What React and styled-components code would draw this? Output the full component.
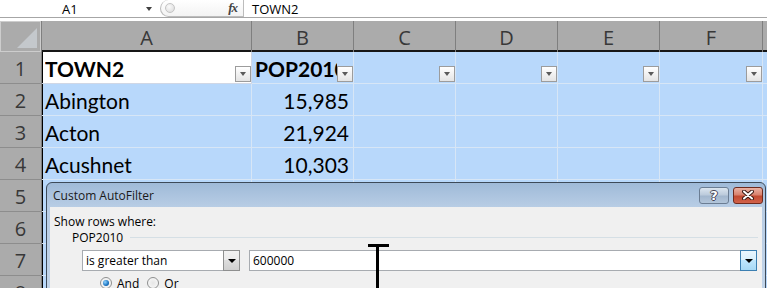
import React from 'react';
import styled, { createGlobalStyle } from 'styled-components';

const GlobalStyle = createGlobalStyle`
    html, body {
        margin: 0;
        padding: 0;
        background: #fff;
        overflow: hidden;
    }
    body {
        font-family: "Open Sans", "Liberation Sans", sans-serif;
    }
`;

const Page = styled.div`
    position: relative;
    width: 767px;
    height: 288px;
    overflow: hidden;
`;

const FormulaBar = styled.div`
    display: flex;
    height: 17px;
    border-bottom: 1px solid #a6a6a6;
    margin-bottom: 3px;
    font: 13px "Open Sans", sans-serif;
    color: #000;
`;

const NameBox = styled.div`
    width: 160px;
    box-sizing: border-box;
    display: flex;
    align-items: center;
    padding-left: 62px;
`;

const NameArrow = styled.span`
    margin-left: auto;
    margin-right: 8px;
    border-left: 3px solid transparent;
    border-right: 3px solid transparent;
    border-top: 4px solid #404040;
`;

const FxPill = styled.div`
    width: 84px;
    box-sizing: border-box;
    display: flex;
    align-items: center;
    border: 1px solid #bcbcbc;
    border-top: none;
    border-radius: 0 0 0 9px;
    border-top-left-radius: 9px;
    background: linear-gradient(#ffffff, #f3f3f3);
    padding: 0 6px 0 4px;
`;

const Grip = styled.span`
    width: 8px;
    height: 8px;
    border-radius: 50%;
    border: 1px solid #c4c4c4;
    background: radial-gradient(circle at 40% 35%, #fafafa, #d8d8d8);
`;

const Fx = styled.span`
    margin-left: auto;
    font: italic bold 13px "Liberation Serif", serif;
    color: #444;
    letter-spacing: -1px;
`;

const FormulaText = styled.div`
    flex: 1;
    display: flex;
    align-items: center;
    padding-left: 8px;
`;

const Sheet = styled.div`
    display: grid;
    width: 870px;
    grid-template-columns: 42px 210px 102px 102px 102px 102px 103px 1fr;
    grid-template-rows: 31px;
    grid-auto-rows: 32px;
`;

const Corner = styled.div`
    background: #ababab;
    border-right: 1px solid #7f7f7f;
    box-shadow: inset 1px 1px 0 #cdcdcd, inset -1px -1px 0 #cdcdcd;
    display: flex;
    align-items: flex-end;
    justify-content: flex-end;
    padding: 0 4px 4px 0;
`;

const CornerMark = styled.span`
    width: 0;
    height: 0;
    border-left: 20px solid transparent;
    border-bottom: 20px solid #c4c8cc;
`;

const ColHeader = styled.div`
    background: #ababab;
    border-right: 1px solid #7f7f7f;
    box-shadow: inset 0 -2px 0 #161616;
    display: flex;
    align-items: center;
    justify-content: center;
    padding-top: 2px;
    font: 20px "Open Sans", sans-serif;
    color: #383838;
`;

const RowHeader = styled.div`
    background: #ababab;
    border-right: 1px solid #7f7f7f;
    border-bottom: 1px solid #8d8d8d;
    display: flex;
    align-items: center;
    justify-content: center;
    padding-top: 2px;
    font: 20px "Open Sans", sans-serif;
    color: #383838;
`;

const Cell = styled.div`
    background: ${p => (p.$active ? '#ffffff' : '#b8d8fb')};
    border-right: 1px solid ${p => (p.$active ? '#d0d7e5' : '#d7e6f6')};
    border-bottom: 1px solid ${p => (p.$active ? '#d0d7e5' : '#d7e6f6')};
    box-shadow: ${p => (p.$edge ? 'inset 1px 0 0 #000' : 'none')};
    display: flex;
    align-items: center;
    justify-content: ${p => (p.$right ? 'flex-end' : 'flex-start')};
    padding: 2px 4px 0 3px;
    min-width: 0;
    overflow: hidden;
    font: ${p => (p.$bold ? 'bold' : 'normal')} 21px Lato, sans-serif;
    color: #000;
`;

const HeadCell = styled(Cell)`
    padding-right: 0;
    padding-bottom: 0;
`;

const HeadText = styled.span`
    flex: 1;
    min-width: 0;
    overflow: hidden;
    white-space: nowrap;
`;

const FilterButton = styled.span`
    flex: none;
    align-self: flex-end;
    margin-bottom: 1px;
    width: 16px;
    height: 16px;
    box-sizing: border-box;
    border: 1px solid #9c9c9c;
    background: linear-gradient(#ffffff, #e4e4e4);
    display: flex;
    align-items: center;
    justify-content: center;
    &::after {
        content: '';
        border-left: 3.5px solid transparent;
        border-right: 3.5px solid transparent;
        border-top: 4px solid #5a5a5a;
    }
`;

const Dialog = styled.div`
    position: absolute;
    left: 46px;
    top: 182px;
    width: 720px;
    height: 130px;
    box-sizing: border-box;
    border: 1px solid #3d4a59;
    border-radius: 6px 6px 0 0;
    background: linear-gradient(#9fbad8, #b8cde5 24px, #c4d6ea);
    font: 12px "Open Sans", sans-serif;
    color: #000;
`;

const TitleBar = styled.div`
    height: 24px;
    display: flex;
    align-items: center;
    padding: 0 2px 0 6px;
`;

const Title = styled.span`
    flex: 1;
    color: #1a1a1a;
`;

const CaptionButton = styled.span`
    width: 30px;
    height: 17px;
    box-sizing: border-box;
    margin-left: 4px;
    border-radius: 3px;
    border: 1px solid ${p => (p.$close ? '#6e2a1e' : '#6b7d93')};
    background: ${p =>
        p.$close
            ? 'linear-gradient(#eab1a3, #d9826e 45%, #c24a31 55%, #d1624a)'
            : 'linear-gradient(#dbe5ef, #bccbdc 45%, #a3b7ce 55%, #b3c6db)'};
    display: flex;
    align-items: center;
    justify-content: center;
    font: bold 13px "DejaVu Sans", sans-serif;
    color: #fff;
    text-shadow: 1px 0 #445, -1px 0 #445, 0 1px #445, 0 -1px #445;
`;

const Body = styled.div`
    margin: 0 3px;
    height: 100%;
    background: #f0f0f0;
    padding: 7px 4px 0 4px;
`;

const Label = styled.div`
    height: 15px;
    line-height: 15px;
`;

const GroupRow = styled.div`
    display: flex;
    align-items: center;
    height: 16px;
    margin-left: 18px;
`;

const GroupLine = styled.span`
    flex: 1;
    height: 1px;
    margin-left: 7px;
    background: #d5dfe5;
`;

const ConditionRow = styled.div`
    display: flex;
    gap: 9px;
    margin: 5px 0 0 28px;
`;

const Combo = styled.div`
    width: ${p => p.$width}px;
    height: 21px;
    box-sizing: border-box;
    border: 1px solid #a7abb0;
    background: #fff;
    display: flex;
    align-items: center;
    padding-left: 3px;
`;

const ComboText = styled.span`
    flex: 1;
`;

const ComboButton = styled.span`
    width: 17px;
    height: 21px;
    box-sizing: border-box;
    margin: -1px -1px -1px 0;
    border: 1px solid ${p => (p.$hot ? '#3c7fb1' : '#8e8f8f')};
    background: ${p =>
        p.$hot
            ? 'linear-gradient(#eaf6fd, #d9f0fc 50%, #bee6fd 50%, #a7d9f5)'
            : 'linear-gradient(#f2f2f2, #ebebeb 50%, #dddddd 50%, #cfcfcf)'};
    display: flex;
    align-items: center;
    justify-content: center;
    &::after {
        content: '';
        border-left: 4px solid transparent;
        border-right: 4px solid transparent;
        border-top: 4px solid #000;
    }
`;

const RadioRow = styled.div`
    display: flex;
    align-items: center;
    height: 16px;
    margin: 4px 0 0 46px;
`;

const Radio = styled.span`
    width: 12px;
    height: 12px;
    box-sizing: border-box;
    border-radius: 50%;
    border: 1px solid #8e8f8f;
    background: radial-gradient(circle, #e6e6e6, #fbfbfb);
    display: flex;
    align-items: center;
    justify-content: center;
    &::after {
        content: '';
        display: ${p => (p.$checked ? 'block' : 'none')};
        width: 6px;
        height: 6px;
        border-radius: 50%;
        background: radial-gradient(circle at 35% 35%, #8fd3ff, #1b73c0 60%, #0d4a85);
    }
`;

const RadioLabel = styled.span`
    margin: 0 8px 0 5px;
`;

const IBeam = styled.svg`
    position: absolute;
    left: 368px;
    top: 244px;
`;

const columns = ['A', 'B', 'C', 'D', 'E', 'F', 'G'];

const rows = [
    ['Abington', '15,985'],
    ['Acton', '21,924'],
    ['Acushnet', '10,303'],
    [], [], [], []
];

const CloseIcon = () => (
    <svg width='12' height='10' viewBox='0 0 12 10'>
        <path d='M2 1.5 L10 8.5 M10 1.5 L2 8.5' stroke='#3b1a14' strokeWidth='4' strokeLinecap='round' />
        <path d='M2 1.5 L10 8.5 M10 1.5 L2 8.5' stroke='#fff' strokeWidth='2' strokeLinecap='round' />
    </svg>
);

const App = () => {
    return (
        <Page>
            <GlobalStyle />
            <FormulaBar>
                <NameBox>
                    A1
                    <NameArrow />
                </NameBox>
                <FxPill>
                    <Grip />
                    <Fx>fx</Fx>
                </FxPill>
                <FormulaText>TOWN2</FormulaText>
            </FormulaBar>

            <Sheet>
                <Corner><CornerMark /></Corner>
                {columns.map(c => <ColHeader key={c}>{c}</ColHeader>)}

                <RowHeader>1</RowHeader>
                <HeadCell $active $edge $bold>
                    <HeadText>TOWN2</HeadText>
                    <FilterButton />
                </HeadCell>
                <HeadCell $bold>
                    <HeadText>POP2010</HeadText>
                    <FilterButton />
                </HeadCell>
                {['C', 'D', 'E', 'F'].map(c => (
                    <HeadCell key={c}>
                        <HeadText />
                        <FilterButton />
                    </HeadCell>
                ))}
                <Cell />

                {rows.map((r, i) => (
                    <React.Fragment key={i}>
                        <RowHeader>{i + 2}</RowHeader>
                        <Cell $edge>{r[0]}</Cell>
                        <Cell $right>{r[1]}</Cell>
                        <Cell />
                        <Cell />
                        <Cell />
                        <Cell />
                        <Cell />
                    </React.Fragment>
                ))}
            </Sheet>

            <Dialog>
                <TitleBar>
                    <Title>Custom AutoFilter</Title>
                    <CaptionButton>?</CaptionButton>
                    <CaptionButton $close><CloseIcon /></CaptionButton>
                </TitleBar>
                <Body>
                    <Label>Show rows where:</Label>
                    <GroupRow>
                        POP2010
                        <GroupLine />
                    </GroupRow>
                    <ConditionRow>
                        <Combo $width={158}>
                            <ComboText>is greater than</ComboText>
                            <ComboButton />
                        </Combo>
                        <Combo $width={508}>
                            <ComboText>600000</ComboText>
                            <ComboButton $hot />
                        </Combo>
                    </ConditionRow>
                    <RadioRow>
                        <Radio $checked />
                        <RadioLabel>And</RadioLabel>
                        <Radio />
                        <RadioLabel>Or</RadioLabel>
                    </RadioRow>
                </Body>
            </Dialog>

            <IBeam width='22' height='46' viewBox='0 0 22 46'>
                <rect x='0' y='0' width='21' height='3' fill='#000' />
                <rect x='8' y='0' width='3' height='46' fill='#000' />
            </IBeam>
        </Page>
    );
};

export default App;
